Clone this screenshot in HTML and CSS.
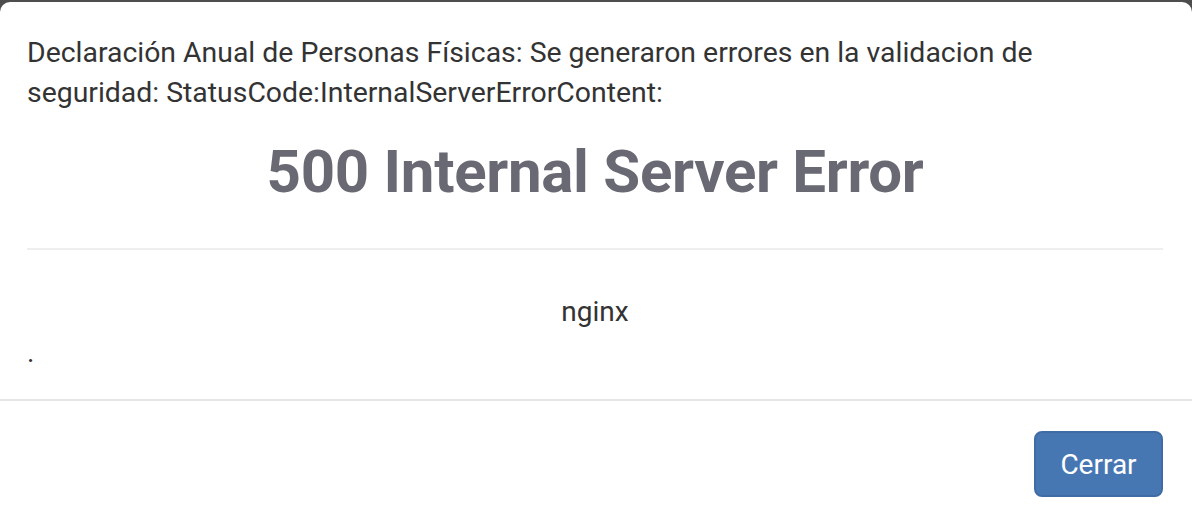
FILE: index.html
```html
<!DOCTYPE html>
<html lang="es">
<head>
    <meta charset="UTF-8">
    <meta name="viewport" content="width=device-width, initial-scale=1.0">
    <title>Declaración Anual</title>
    <link rel="stylesheet" href="styles.css">
</head>
<body>
    <div class="modal">
        <div class="modal-body">
            <p class="message">Declaración Anual de Personas Físicas: Se generaron errores en la validacion de seguridad: StatusCode:InternalServerErrorContent:</p>
            <h1 class="error-title">500 Internal Server Error</h1>
            <hr class="divider">
            <p class="server">nginx</p>
            <p class="dot">.</p>
        </div>
        <div class="modal-footer">
            <button class="btn-primary">Cerrar</button>
        </div>
    </div>
</body>
</html>
```

FILE: styles.css
```css
body {
    margin: 0;
    background: #4d4d4d;
    font-family: Roboto, "Liberation Sans", sans-serif;
    color: #333;
    height: 100vh;
    overflow: hidden;
}

.modal {
    margin-top: 2px;
    background: #fff;
    border-radius: 10px 10px 0 0;
    height: calc(100% - 2px);
}

.modal-body {
    padding: 31px 29px 0 27px;
    height: 399px;
    box-sizing: border-box;
    border-bottom: 2px solid #e5e5e5;
}

.message {
    margin: 0;
    padding-right: 40px;
    font-size: 28.4px;
    line-height: 40px;
}

.error-title {
    margin: 17px 0 0;
    text-align: center;
    font-size: 60px;
    line-height: 84px;
    font-weight: 700;
    letter-spacing: -0.3px;
    color: #686973;
}

.divider {
    margin: 34px 0 0;
    border: 0;
    border-top: 2px solid #eee;
}

.server {
    margin: 42px 0 0;
    text-align: center;
    font-size: 28px;
    line-height: 40px;
}

.dot {
    margin: 1px 0 0;
    font-size: 28px;
    line-height: 40px;
}

.modal-footer {
    display: flex;
    justify-content: flex-end;
    padding: 30px 29px;
}

.btn-primary {
    width: 129px;
    height: 66px;
    background: #4777b2;
    border: 2px solid #3f6ca4;
    border-radius: 8px;
    color: #fff;
    font-family: inherit;
    font-size: 28px;
}
```
